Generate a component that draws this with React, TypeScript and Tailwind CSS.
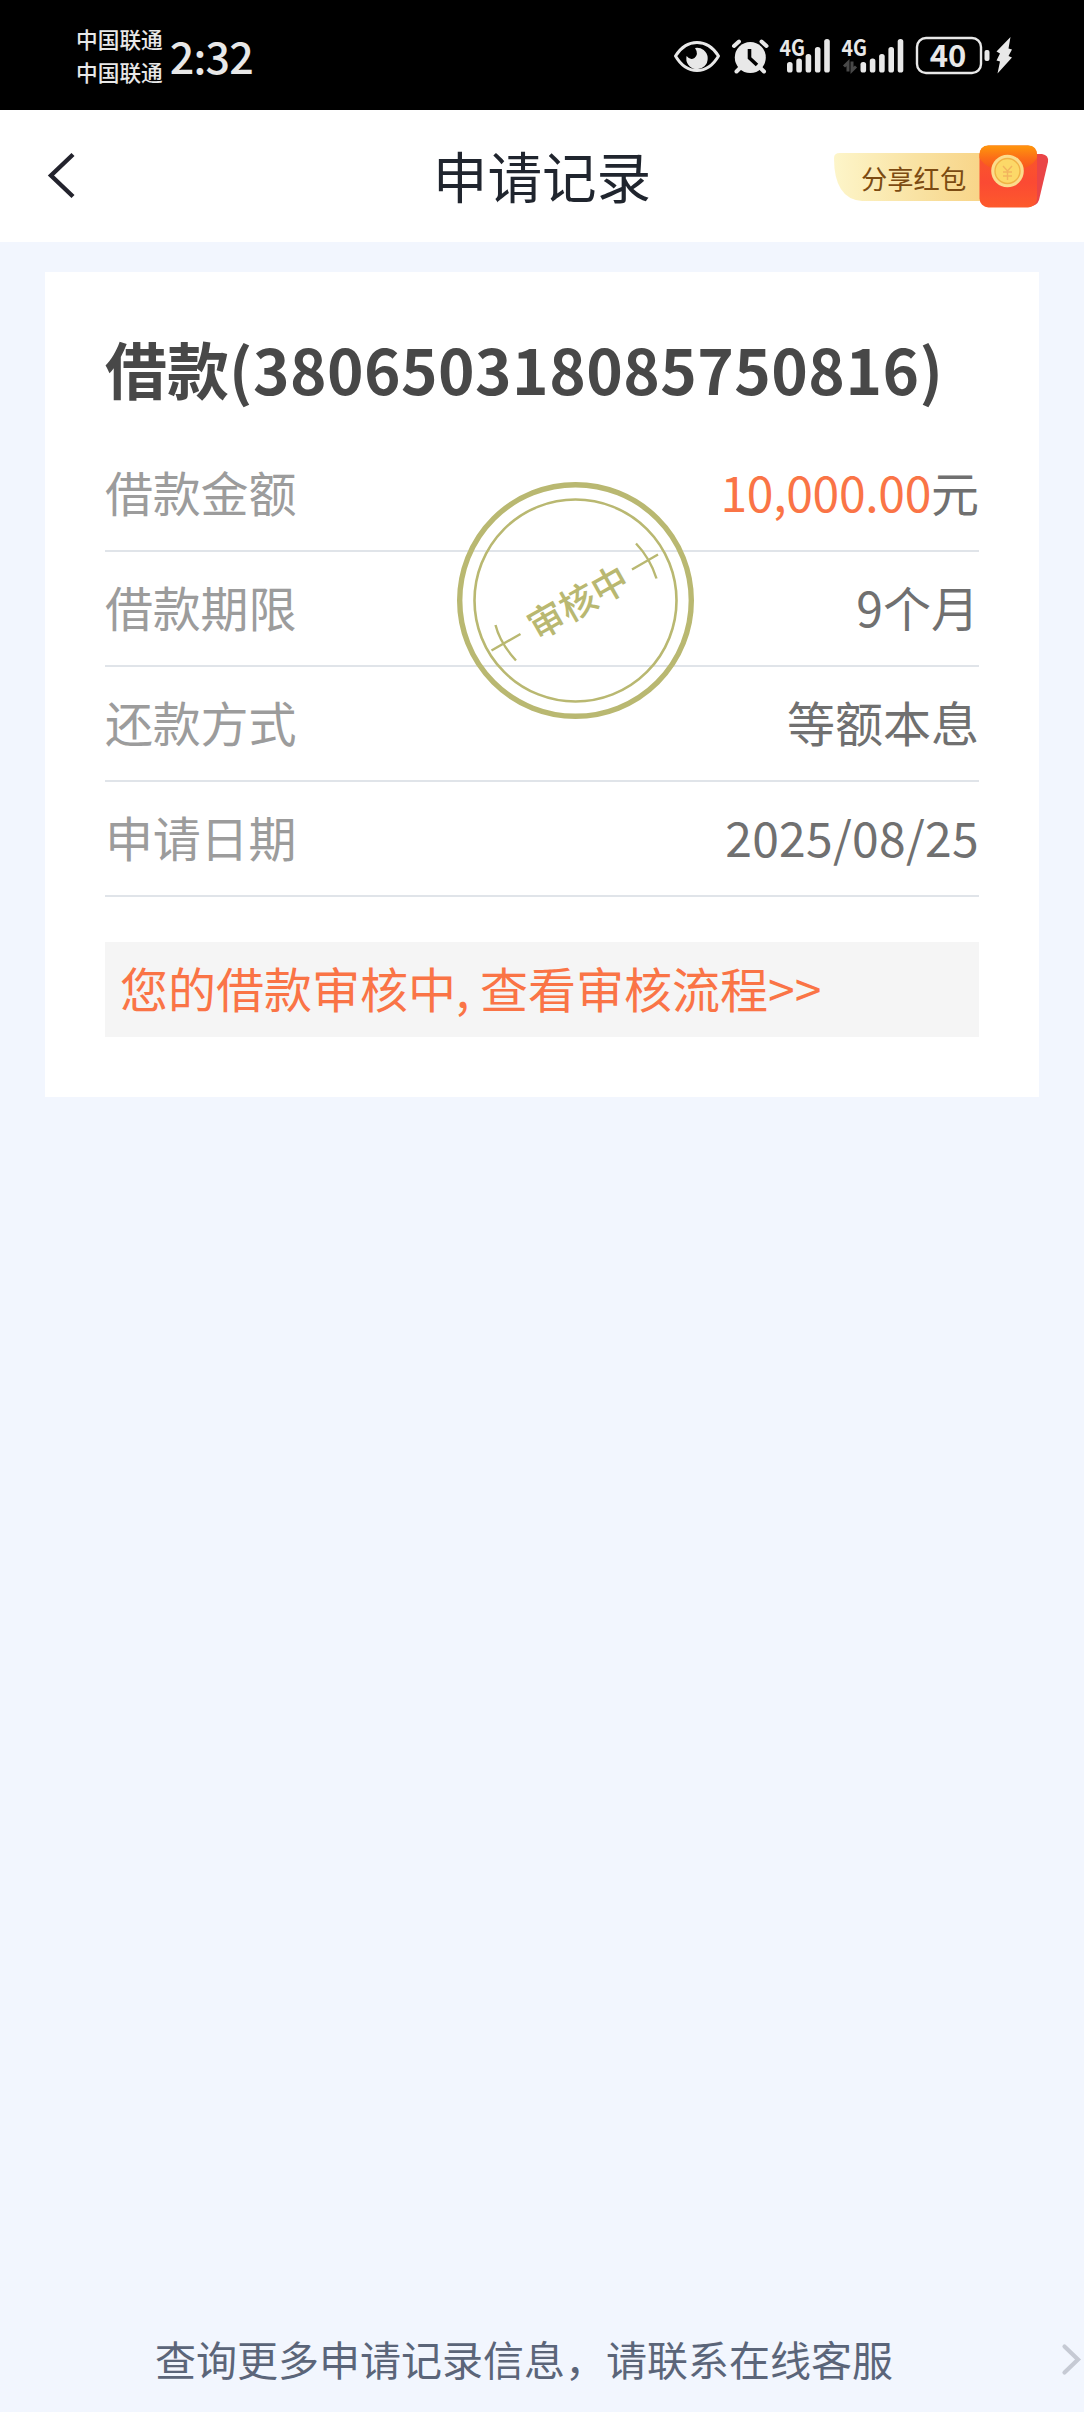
import { ReactNode } from "react";

const RECORD = {
  id: "380650318085750816",
  amount: "10,000.00",
  term: "9个月",
  method: "等额本息",
  date: "2025/08/25",
};

const CARRIERS = ["中国联通", "中国联通"];

export default function App() {
  return (
    <div className="flex h-[2412px] w-[1084px] flex-col overflow-hidden bg-[#f2f6fe] font-['Noto_Sans_CJK_SC',sans-serif]">
      <StatusBar />
      <Header />
      <main className="flex-1 pt-[30px] pl-[45px]">
        <RecordCard />
      </main>
      <Footer />
    </div>
  );
}

function StatusBar() {
  return (
    <div className="flex h-[110px] shrink-0 items-start bg-black text-[#e8e8e8]">
      <div className="flex flex-col pt-[22px] pl-[76px] text-[21.7px] leading-[33px] font-medium">
        {CARRIERS.map((name, i) => (
          <span key={i}>{name}</span>
        ))}
      </div>
      <span className="ml-[7px] pt-[30px] text-[43px] leading-[50px] font-medium tracking-[-0.8px]">2:32</span>
      <div className="flex-1" />
      <StatusIcons />
    </div>
  );
}

function StatusIcons() {
  return (
    <svg width="424" height="110" viewBox="660 0 424 110" fill="none" className="shrink-0">
      {/* eye */}
      <path
        d="M675.5 56 Q684 42.500 697 42.500 Q710 42.500 718.500 56 Q710 70.500 697 70.500 Q684 70.500 675.500 56Z"
        stroke="#e8e8e8"
        strokeWidth="3"
        strokeLinejoin="round"
      />
      <path d="M695 48 A10.700 10.700 0 1 1 686.600 56 Q690 60.500 694.500 58 Q699 54 695 48Z" fill="#e8e8e8" />
      {/* alarm */}
      <circle cx="750.300" cy="57.500" r="15.500" fill="#e8e8e8" />
      <path
        d="M734 46l5-4.500M766.500 46l-5-4.500M740 68l-3.500 3.500M760.500 68l3.500 3.500"
        stroke="#e8e8e8"
        strokeWidth="4"
        strokeLinecap="round"
      />
      <path d="M749.500 49v9l7.500 7" stroke="#000" strokeWidth="3.600" />
      <Signal x={789.5} textX={779.5} />
      <Signal x={863} textX={841.5} />
      <path d="M848 71.500v-9l-4 4M852 61.500v9l4-4" stroke="#484848" strokeWidth="3" />
      {/* battery */}
      <rect x="917" y="38" width="64" height="35" rx="9" stroke="#e8e8e8" strokeWidth="2.400" />
      <rect x="984.500" y="50" width="5" height="11" rx="2" fill="#e8e8e8" />
      <text
        x="948"
        y="66.500"
        fill="#e8e8e8"
        fontSize="31"
        fontWeight="700"
        textAnchor="middle"
        className="font-['Noto_Sans_CJK_SC',sans-serif]"
      >
        40
      </text>
      <path
        d="M1010.500 37L996.500 51.500L1000 53.500L996.500 60.500L1000 61.500L997.500 73.500L1012 57.500L1008.500 56L1012 49.500L1008.500 48.500Z"
        fill="#e8e8e8"
      />
    </svg>
  );
}

function Signal({ x, textX }: { x: number; textX: number }) {
  const tops = [62, 58.5, 54, 47, 39];
  return (
    <g fill="#e8e8e8">
      {tops.map((top, i) => (
        <rect key={top} x={x - 2.5 + i * 9.3} y={top} width="5.600" height={72.5 - top} rx="2.600" />
      ))}
      <text
        x={textX}
        y="55.500"
        fontSize="22.500"
        fontWeight="700"
        textLength="25.500"
        lengthAdjust="spacingAndGlyphs"
        className="font-['Noto_Sans_CJK_SC',sans-serif]"
      >
        4G
      </text>
    </g>
  );
}

function Header() {
  return (
    <header className="grid h-[132px] shrink-0 grid-cols-3 items-center bg-white">
      <svg width="30" height="48" viewBox="0 0 30 48" fill="none" className="ml-[47px]">
        <path d="M26 2.500L4 23.500L26 44.500" stroke="#23232d" strokeWidth="4.400" />
      </svg>
      <h1 className="pb-[2px] text-center text-[54.6px] leading-[60px] whitespace-nowrap text-[#20252e]">申请记录</h1>
      <ShareBadge />
    </header>
  );
}

function ShareBadge() {
  return (
    <svg width="250" height="132" viewBox="834 110 250 132" className="justify-self-end">
      <defs>
        <linearGradient id="pill" x1="0" x2="1" y1="0" y2="0">
          <stop offset="0" stopColor="#fdf5c9" />
          <stop offset="0.500" stopColor="#f9e3a4" />
          <stop offset="1" stopColor="#f8d283" />
        </linearGradient>
        <linearGradient id="envelope" x1="0" x2="0" y1="0" y2="1">
          <stop offset="0" stopColor="#fa5a26" />
          <stop offset="0.600" stopColor="#fb4a33" />
          <stop offset="1" stopColor="#fd5a2c" />
        </linearGradient>
        <linearGradient id="flap" x1="0" x2="0" y1="0" y2="1">
          <stop offset="0" stopColor="#fe960c" />
          <stop offset="0.500" stopColor="#fc6d18" />
          <stop offset="1" stopColor="#f7501f" />
        </linearGradient>
      </defs>
      <path d="M834 158q0-5 6-5h154v48H862q-28-2-28-43z" fill="url(#pill)" />
      <text
        x="861"
        y="188.500"
        fontSize="26.300"
        fill="#7c4b12"
        className="font-['Noto_Sans_CJK_SC',sans-serif]"
      >
        分享红包
      </text>
      <path d="M1030 154h12q7 1 6 8l-9 38q-2 6-9 6z" fill="#ea4547" />
      <rect x="979.500" y="145.500" width="57.500" height="62" rx="9" fill="url(#envelope)" />
      <path d="M979.500 158v-3q0-9.500 9-9.500h39.500q9 0 9 9.500v3q-8 13-28.700 13t-28.800-13z" fill="url(#flap)" />
      <circle cx="1007.500" cy="171" r="16.300" fill="#fbdc8c" />
      <circle cx="1007.500" cy="171" r="12.500" fill="#fcd868" stroke="#f0b246" strokeWidth="1.400" />
      <path
        d="M1003 166l4.500 5l4.500-5M1003 172h9M1003 176h9M1007.500 171v9"
        stroke="#f2b45e"
        strokeWidth="1.400"
        fill="none"
      />
    </svg>
  );
}

function RecordCard() {
  return (
    <section className="relative flex h-[825px] w-[994px] flex-col bg-white px-[60px] text-[48px]">
      <h2 className="pt-[59px] text-[62px] leading-[74px] font-bold whitespace-nowrap text-[#484848]">
        借款<span className="tracking-[0.45px]">({RECORD.id})</span>
      </h2>
      <div className="mt-[32px] flex flex-col">
        <Row label="借款金额">
          <span className="tracking-[-0.3px] text-[#fa7446]">{RECORD.amount}</span>元
        </Row>
        <Row label="借款期限">{RECORD.term}</Row>
        <Row label="还款方式">{RECORD.method}</Row>
        <Row label="申请日期">
          <span className="tracking-[0.3px]">{RECORD.date}</span>
        </Row>
      </div>
      <div className="mt-[45px] h-[95px] bg-[#f5f5f5] pl-[15px] leading-[91px] text-[#fa7446]">
        您的借款审核中, 查看审核流程&gt;&gt;
      </div>
      <Stamp />
    </section>
  );
}

function Row({ label, children }: { label: string; children: ReactNode }) {
  return (
    <div className="flex h-[115px] justify-between border-b-2 border-[#e0e4e9] leading-[109px] text-[#707070]">
      <span className="tracking-[-0.2px] text-[#9c9c9c]">{label}</span>
      <span>{children}</span>
    </div>
  );
}

function Stamp() {
  return (
    <svg
      width="240"
      height="240"
      viewBox="-120 -120 240 240"
      fill="none"
      stroke="#b9b871"
      className="absolute top-[208px] left-[410px]"
    >
      <circle cx="0.500" cy="0.500" r="115.800" strokeWidth="5.400" />
      <circle cx="0.500" cy="0.500" r="101" strokeWidth="2.600" />
      <g strokeWidth="2.400">
        <path d="M-83.500 50.500L-54.500 34M-79.500 25Q-75 43 -59 60.500" />
        <path d="M57 -30.500L83 -45.500M61 -56.500Q75 -42 81.500 -21.500" />
      </g>
      <text
        x="1.500"
        y="17"
        fontSize="36.500"
        fontWeight="500"
        textAnchor="middle"
        fill="#b9b871"
        stroke="none"
        transform="rotate(-29.500)"
        className="font-['Noto_Sans_CJK_SC',sans-serif]"
      >
        审核中
      </text>
    </svg>
  );
}

function Footer() {
  return (
    <footer className="flex h-[110px] shrink-0 items-start justify-between pl-[155px] text-[41px] leading-[112px] text-[#5b6579]">
      <span className="whitespace-nowrap">查询更多申请记录信息，请联系在线客服</span>
      <svg width="24" height="110" viewBox="0 0 24 110" fill="none">
        <path d="M4.500 44.500L18 57.500L4.500 70.500" stroke="#c6cad4" strokeWidth="4.200" strokeLinecap="round" />
      </svg>
    </footer>
  );
}
